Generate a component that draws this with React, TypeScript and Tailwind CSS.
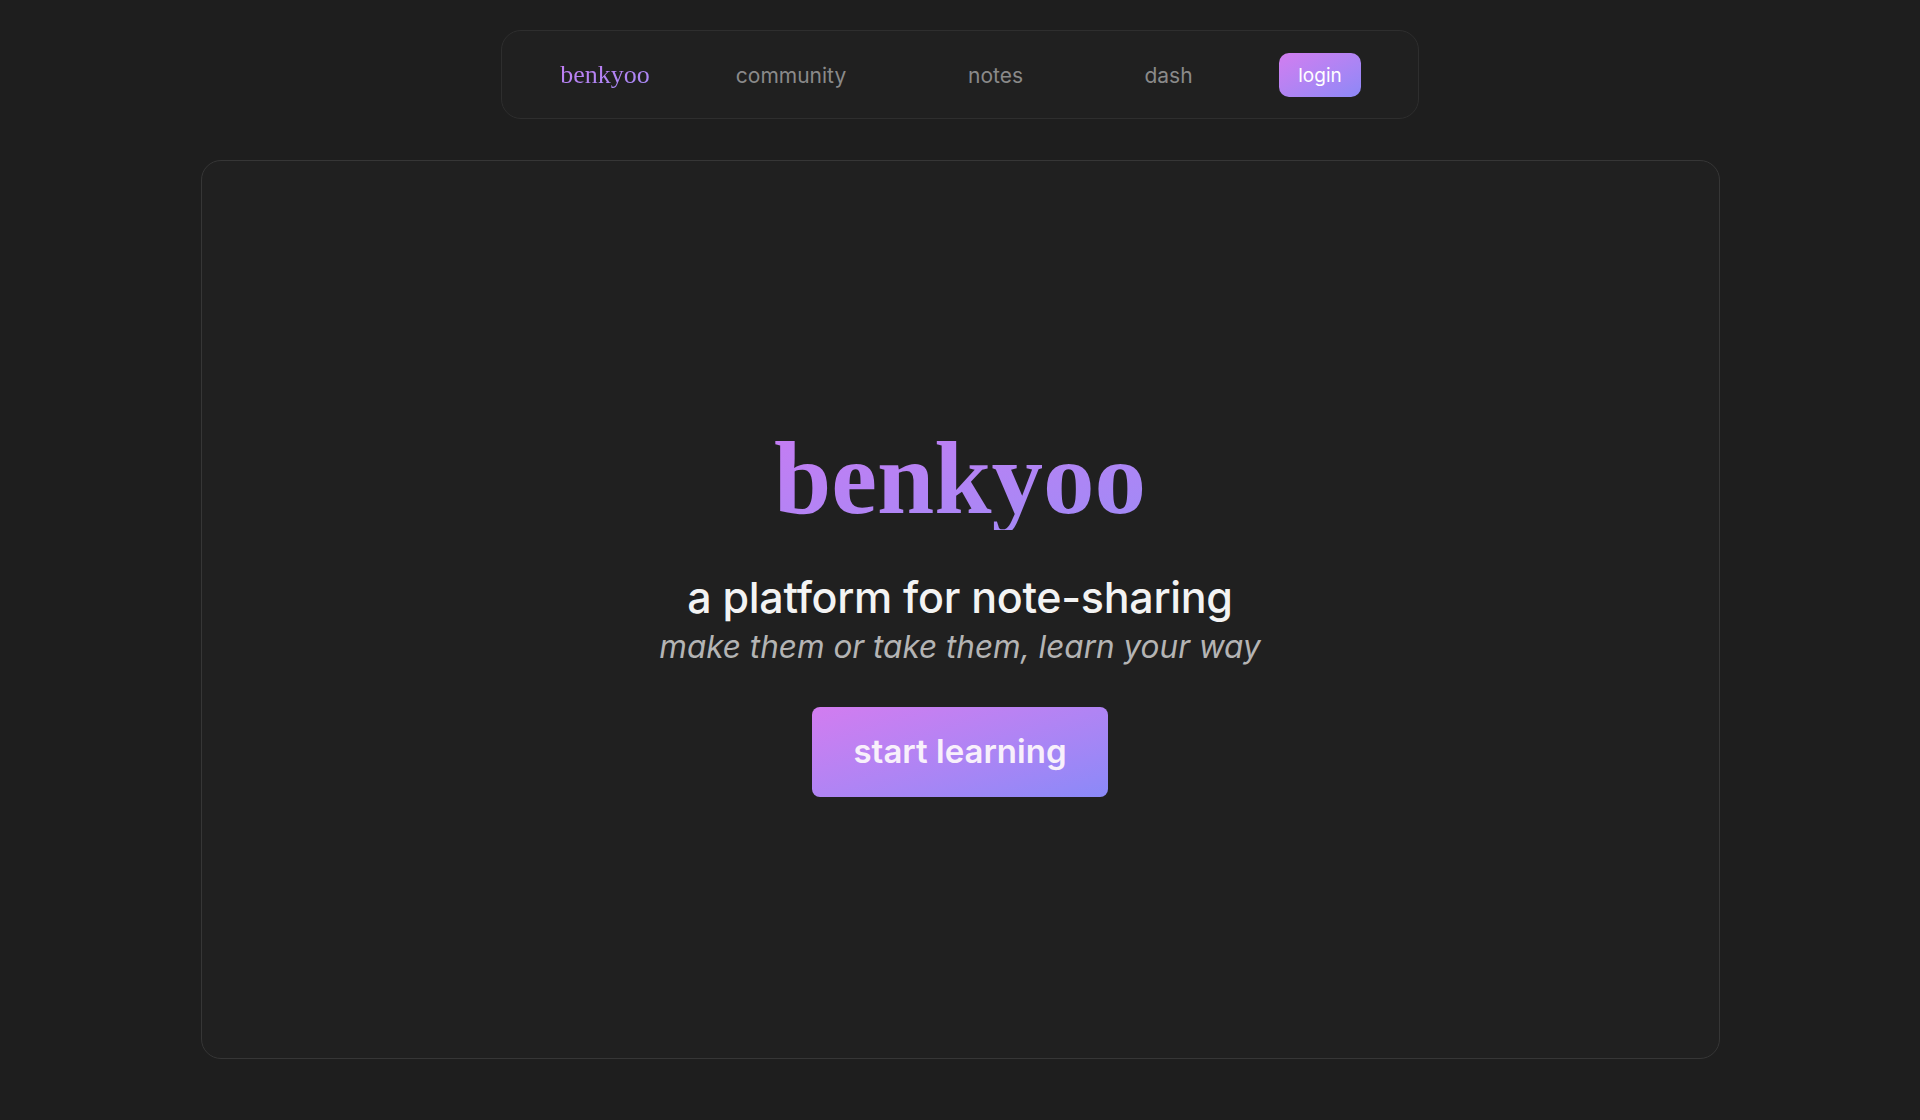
import React from "react";

export default function App() {
  return (
    <div className="min-h-[1120px] w-full bg-[#1e1e1e] flex flex-col items-center pt-[30px]" style={{ fontFamily: "Inter, 'Noto Sans', sans-serif" }}>
      <nav className="w-[918px] h-[89px] rounded-[20px] border border-[#2e2e2e] bg-[#202020] flex items-center pl-[43px]">
        <div className="w-[120px] flex justify-center">
          <span className="text-[26px] leading-none bg-gradient-to-br from-[#c27cf3] to-[#a58af5] bg-clip-text text-transparent" style={{ fontFamily: "'Liberation Serif', serif" }}>benkyoo</span>
        </div>
        <div className="w-[120px] ml-[66px] flex justify-center text-[21px] text-[#8a8a8a] leading-none pt-[2px]">community</div>
        <div className="w-[101px] ml-[94px] flex justify-center text-[21px] text-[#8a8a8a] leading-none pt-[2px]">notes</div>
        <div className="w-[101px] ml-[72px] flex justify-center text-[21px] text-[#8a8a8a] leading-none pt-[2px]">dash</div>
        <button className="ml-[60px] w-[82px] h-[44px] rounded-[10px] bg-gradient-to-br from-[#d27df0] to-[#8c88f7] text-white text-[19px] leading-none pt-[1px]">login</button>
      </nav>
      <main className="mt-[41px] w-[1519px] h-[899px] rounded-[20px] border border-[#363636] bg-[#202020] flex flex-col items-center pt-[266px]">
        <h1 className="text-[103px] leading-none font-bold bg-gradient-to-br from-[#c57cf3] to-[#9f8af6] bg-clip-text text-transparent" style={{ fontFamily: "'Liberation Serif', serif" }}>benkyoo</h1>
        <h2 className="mt-[46px] text-[43px] leading-none text-[#f3f3f3] font-medium tracking-[-0.3px]">a platform for note-sharing</h2>
        <p className="mt-[12px] text-[31.5px] leading-none italic text-[#b4b4b4]">make them or take them, learn your way</p>
        <button className="mt-[44px] w-[296px] h-[90px] rounded-[8px] bg-gradient-to-br from-[#d27cf0] via-[#b084f4] to-[#8a89f8] text-[33px] font-semibold text-[#f8f0fb] leading-none">start learning</button>
      </main>
    </div>
  );
}
